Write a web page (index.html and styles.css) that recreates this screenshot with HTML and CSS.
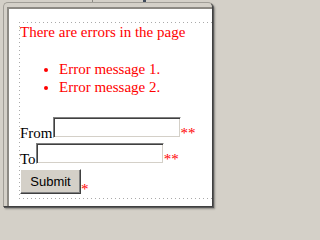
FILE: index.html
```html
<!DOCTYPE html>
<html>
<head>
<meta charset="utf-8">
<link rel="stylesheet" href="styles.css">
</head>
<body>
<div class="tabs"><span class="tick t1"></span><span class="tick t2"></span></div>
<div class="outer">
  <div class="page">
    <div class="form">
      <div class="summary">There are errors in the page</div>
      <ul class="errors">
        <li>Error message 1.</li>
        <li>Error message 2.</li>
      </ul>
      <div class="row row-from"><span class="label">From</span><input class="text" type="text"><span class="req">**</span></div>
      <div class="row row-next"><span class="label">To</span><input class="text" type="text"><span class="req">**</span></div>
      <div class="row row-next"><button class="submit" type="button">Submit</button><span class="req">*</span></div>
    </div>
  </div>
</div>
</body>
</html>
```
FILE: styles.css
```css
html, body {
  margin: 0;
  padding: 0;
}
body {
  width: 217px;
  height: 212px;
  overflow: hidden;
  background: #d4d0c8;
  font-family: "Liberation Serif", "Times New Roman", serif;
}
.tabs {
  display: flex;
  height: 2px;
}
.tick {
  height: 2px;
  width: 1px;
  background: #8c8983;
}
.t1 { margin-left: 92px; }
.t2 { margin-left: 50px; width: 3px; background: #404a5a; }

.outer {
  margin-left: 3px;
  width: 205px;
  padding: 4px 0 0 3px;
  border: 1px solid;
  border-color: #a19e97 #404040 #404040 #a19e97;
  border-radius: 5px 5px 0 0;
  box-shadow: 1px 1px 0 #5a5a5a, 2px 2px 2px rgba(0, 0, 0, 0.35);
}
.page {
  width: 193px;
  padding: 13px 0 7px 10px;
  border-top: 2px solid #8d8a84;
  border-left: 2px solid #8d8a84;
  background: #fff;
  overflow: hidden;
}
.form {
  width: 260px;
  padding: 1px 0 5px 1px;
  background:
    repeating-linear-gradient(to right, #aaaaaa 0 1px, transparent 1px 4px) left top / 100% 1px no-repeat,
    repeating-linear-gradient(to right, #aaaaaa 0 1px, transparent 1px 4px) left bottom / 100% 1px no-repeat,
    repeating-linear-gradient(to bottom, #aaaaaa 0 1px, transparent 1px 4px) left top / 1px 100% no-repeat;
}
.summary {
  color: #ff0000;
  font-size: 15px;
  line-height: 18px;
}
.errors {
  margin: 19px 0 0;
  padding-left: 39px;
  color: #ff0000;
  font-size: 15px;
  line-height: 18px;
}
.row {
  display: flex;
  align-items: flex-end;
}
.row-from { margin-top: 21px; }
.row-next { margin-top: 5px; }
.label, .req {
  font-size: 15px;
  line-height: 18px;
  margin-bottom: -4px;
}
.label { color: #000; }
.req { color: #ff0000; }
.text {
  width: 128px;
  height: 21px;
  box-sizing: border-box;
  margin: 0;
  padding: 0;
  border: 1px solid;
  border-color: #808080 #ffffff #ffffff #808080;
  box-shadow: inset 1px 1px #404040, inset -1px -1px #d4d0c8;
  background: #fff;
}
.submit {
  width: 61px;
  height: 25px;
  box-sizing: border-box;
  margin: 0;
  padding: 0;
  font-family: "Liberation Sans", Arial, sans-serif;
  font-size: 13px;
  color: #000;
  background: #d4d0c8;
  border: 1px solid;
  border-color: #ffffff #404040 #404040 #ffffff;
  box-shadow: inset -1px -1px #808080;
}
```
